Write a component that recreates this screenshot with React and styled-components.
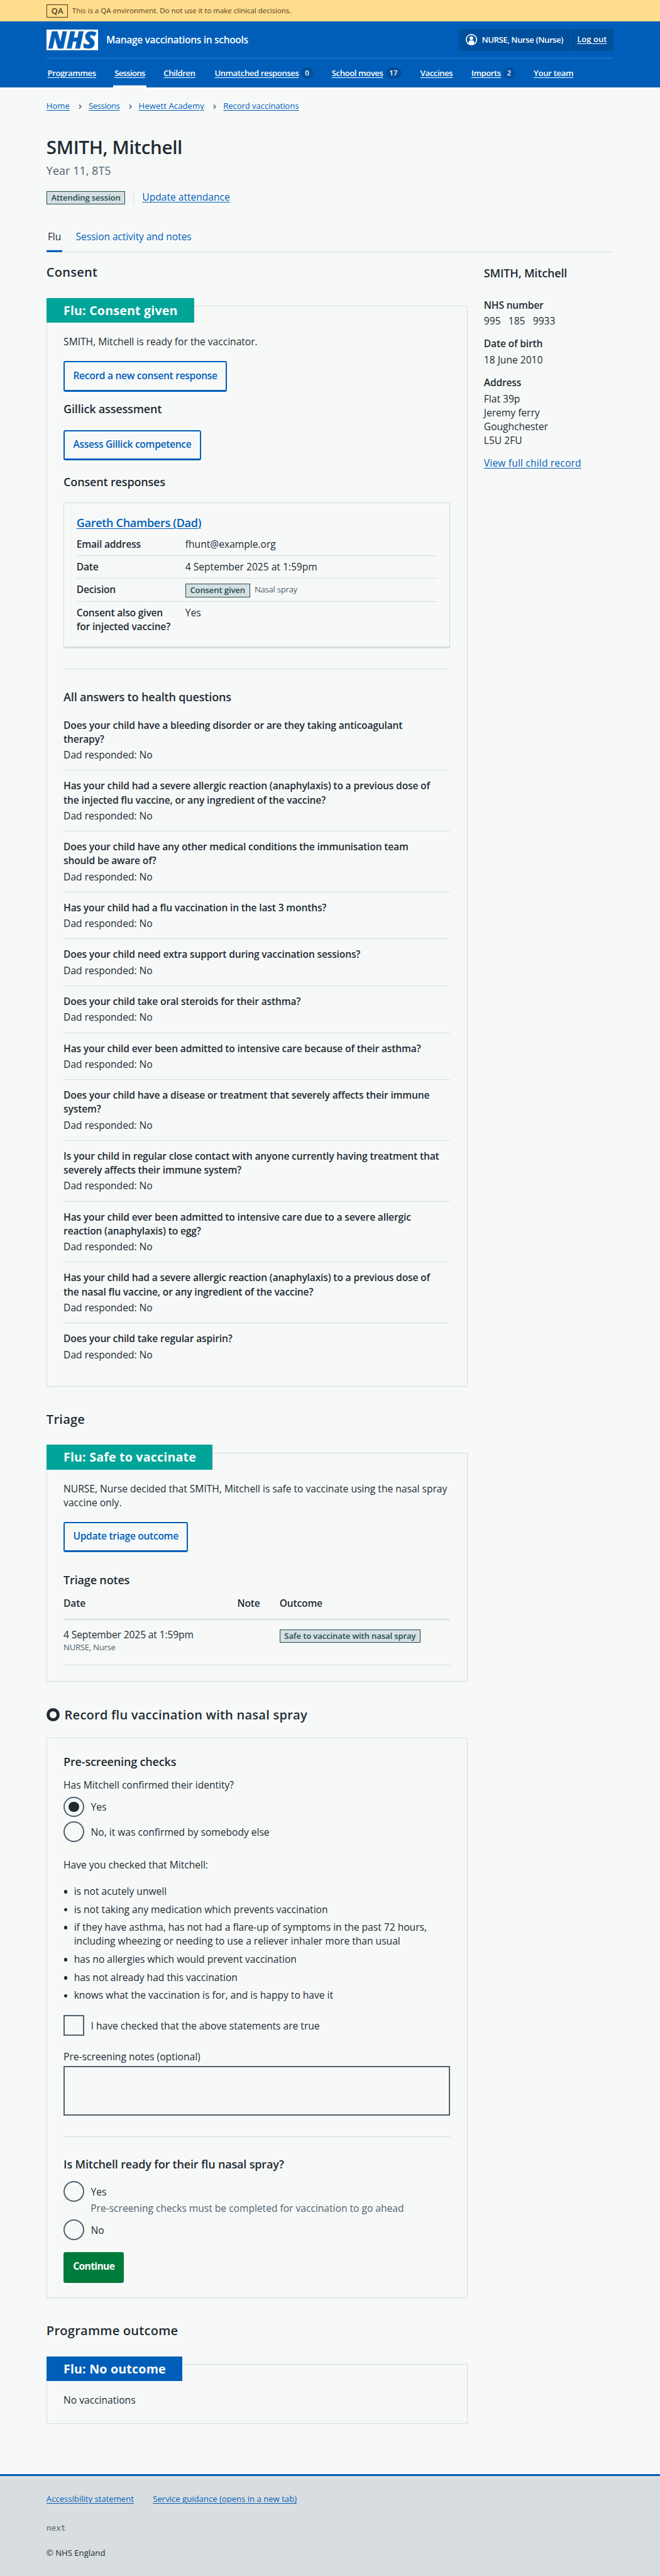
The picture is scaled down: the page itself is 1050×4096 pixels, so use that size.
import React from "react";
import styled, { createGlobalStyle, css } from "styled-components";

const c = {
  text: "#212b32",
  secondary: "#4f616c",
  blue: "#005eb8",
  darkBlue: "#004f9c",
  teal: "#00a499",
  green: "#007b3b",
  border: "#d8dde0",
  page: "#f7f9f9",
  white: "#ffffff",
};

const Global = createGlobalStyle`
  *, *::before, *::after { box-sizing: border-box; }
  html { font-size: 8.2025px; background: ${c.border}; }
  body {
    margin: 0;
    background: ${c.page};
    color: ${c.text};
    font-family: "Open Sans", "Noto Sans", sans-serif;
    font-size: 1.9rem;
    line-height: 2.7rem;
  }
  h1, h2, h3, p, ul, dl, dd, dt { margin: 0; padding: 0; }
`;

const Container = styled.div`
  width: 110rem;
  margin: 0 auto;
`;

const Link = styled.a`
  color: ${c.blue};
  letter-spacing: ${(p) => p.$tracking || "inherit"};
  text-decoration: underline;
  text-decoration-thickness: 1px;
  text-underline-offset: 0.2rem;
`;

/* Environment banner */
const Banner = styled.div`
  height: 4.2rem;
  background: #ffdc8e;
  color: #4d3c11;
`;
const BannerRow = styled(Container)`
  height: 100%;
  display: flex;
  align-items: center;
  gap: 0.8rem;
`;
const BannerTag = styled.strong`
  width: 4.2rem;
  height: 2.6rem;
  border: 1px solid #4d3c11;
  font-size: 1.6rem;
  font-weight: 600;
  line-height: 2.2rem;
  text-align: center;
`;
const BannerText = styled.span`
  font-size: 1.4rem;
  line-height: 2.4rem;
`;

/* Header */
const Header = styled.header`
  height: 12.8rem;
  background: ${c.blue};
  color: ${c.white};
`;
const HeaderTop = styled.div`
  height: 7.2rem;
  display: flex;
  align-items: center;
  justify-content: space-between;
  border-bottom: 1px solid rgba(255, 255, 255, 0.2);
`;
const Brand = styled.div`
  display: flex;
  align-items: center;
  gap: 1.6rem;
`;
const Logo = styled.svg`
  width: 10rem;
  height: 4rem;
  display: block;
  overflow: visible;
`;
const ServiceName = styled.span`
  font-weight: 600;
  letter-spacing: -0.022em;
`;
const Account = styled.div`
  height: 4.2rem;
  display: flex;
  background: ${c.darkBlue};
  border-radius: 0.4rem;
  font-size: 1.6rem;
  font-weight: 600;
  line-height: 4.1rem;
`;
const AccountUser = styled.div`
  width: 21.7rem;
  padding-left: 1.4rem;
  display: flex;
  align-items: center;
  gap: 0.9rem;
  border-right: 1px solid ${c.blue};
  letter-spacing: -0.032em;
  white-space: nowrap;
`;
const UserIcon = styled.svg`
  width: 2.2rem;
  height: 2.2rem;
  flex: none;
`;
const LogOut = styled(Link)`
  padding: 0 1.3rem;
  color: inherit;
`;
const Nav = styled.nav`
  height: 5.6rem;
  margin-left: -0.1rem;
  display: flex;
  gap: 3rem;
`;
const NavItem = styled.a`
  flex: 0 0 ${(p) => p.$width}rem;
  height: 5.6rem;
  padding: 0 0.3rem;
  display: flex;
  align-items: center;
  gap: 0.4rem;
  font-size: 1.6rem;
  font-weight: 600;
  letter-spacing: ${(p) => p.$tracking || "-0.031em"};
  white-space: nowrap;
  ${(p) =>
    p.$current &&
    css`
      box-shadow: inset 0 -0.4rem ${c.white};
    `}
`;
const NavText = styled.span`
  line-height: 2.4rem;
  text-decoration: underline;
  text-decoration-thickness: 1px;
  text-underline-offset: 0.2rem;
`;
const Count = styled.span`
  height: 2.2rem;
  padding: 0 0.79rem;
  border-radius: 1.1rem;
  background: ${c.darkBlue};
  font-size: 1.4rem;
  line-height: 2.2rem;
  letter-spacing: 0;
`;

/* Page top */
const Breadcrumbs = styled.nav`
  padding-top: 2.38rem;
  display: flex;
  align-items: center;
  font-size: 1.6rem;
  line-height: 2.4rem;
`;
const Chevron = styled.svg`
  width: 0.6rem;
  height: 0.9rem;
  margin: 0.1rem 1.35rem 0 1.75rem;
`;
const Title = styled.h1`
  margin-top: 4.52rem;
  font-size: 3.6rem;
  font-weight: 600;
  line-height: 4.4rem;
  letter-spacing: -0.011em;
`;
const Caption = styled.p`
  margin-top: 0.85rem;
  color: ${c.secondary};
  font-size: 2.2rem;
  line-height: 3rem;
`;
const StatusRow = styled.div`
  height: 2.7rem;
  margin-top: 2.45rem;
  display: flex;
  align-items: center;
`;
const StatusAction = styled.div`
  margin-left: 1.6rem;
  padding-left: 1.6rem;
  height: 2.7rem;
  line-height: 2.65rem;
  border-left: 1px solid ${c.border};
`;
const Tag = styled.strong`
  display: inline-block;
  height: 2.6rem;
  padding: 0 0.8rem;
  border: 1px solid #1f4b4d;
  background: #d5dfe1;
  color: #1f4b4d;
  font-size: 1.6rem;
  font-weight: 600;
  line-height: 2.25rem;
  letter-spacing: -0.01em;
  white-space: nowrap;
`;
const Tabs = styled.div`
  height: 4.4rem;
  margin-top: 4.75rem;
  display: flex;
  gap: 2.35rem;
  border-bottom: 1px solid ${c.border};
`;
const Tab = styled.a`
  height: 4.4rem;
  padding: 0 0.25rem;
  color: ${(p) => (p.$current ? c.text : c.blue)};
  letter-spacing: -0.006em;
  ${(p) =>
    p.$current &&
    css`
      width: 3.1rem;
      box-shadow: inset 0 -0.4rem ${c.blue};
    `}
`;
const Columns = styled.div`
  display: grid;
  grid-template-columns: 81.65rem 1fr;
  column-gap: 3.2rem;
`;

/* Sections and cards */
const H2 = styled.h2`
  margin-top: ${(p) => p.$top || 4.73}rem;
  display: flex;
  align-items: center;
  gap: 0.9rem;
  font-size: 2.45rem;
  font-weight: 600;
  line-height: 3.2rem;
  letter-spacing: 0.011em;
`;
const Ring = styled.span`
  width: 2.6rem;
  height: 2.6rem;
  border: 0.72rem solid ${c.text};
  border-radius: 50%;
`;
const H3 = styled.h3`
  margin-top: ${(p) => p.$top}rem;
  font-size: 2.2rem;
  font-weight: 600;
  line-height: 3rem;
  letter-spacing: ${(p) => p.$tracking || "-0.01em"};
`;
const Card = styled.section`
  margin-top: ${(p) => p.$top || 4.83}rem;
  padding: 0 3.2rem ${(p) => p.$bottom}rem;
  border: 1px solid ${c.border};
`;
const CardLabel = styled.h3`
  width: fit-content;
  height: 4.8rem;
  margin: calc(-1.5rem - 1px) 0 0 calc(-3.2rem - 1px);
  padding: 0 3.22rem 0 3.3rem;
  background: ${(p) => p.$color};
  color: ${c.white};
  font-size: 2.4rem;
  font-weight: 700;
  line-height: 4.8rem;
  letter-spacing: 0.008em;
`;
const Text = styled.p`
  margin-top: ${(p) => p.$top}rem;
`;
const Rule = styled.div`
  height: 1px;
  margin-top: 4rem;
  background: ${c.border};
`;
const Button = styled.a`
  display: block;
  width: fit-content;
  height: 5.9rem;
  margin-top: ${(p) => p.$top}rem;
  padding: 1.1rem 1.63rem 0;
  border: 2px solid ${c.blue};
  border-bottom-width: 3px;
  border-radius: 0.4rem;
  color: ${c.blue};
  font-weight: 600;
  letter-spacing: -0.0195em;
`;
const PrimaryButton = styled(Button)`
  padding: 1.1rem 1.6rem 0;
  border-color: ${c.green};
  background: ${c.green};
  color: ${c.white};
  font-weight: 700;
  letter-spacing: -0.039em;
`;

/* Consent response */
const Response = styled.div`
  height: 28.2rem;
  margin-top: 2.55rem;
  padding: 2.25rem 2.4rem 0;
  border: 1px solid ${c.border};
  border-bottom: 3px solid ${c.border};
`;
const Summary = styled.dl`
  margin-top: 0.56rem;
`;
const SummaryRow = styled.div`
  display: grid;
  grid-template-columns: 21.1rem 1fr;
  height: ${(p) => p.$height || 4.4}rem;
  padding-top: 0.7rem;
  border-bottom: ${(p) => (p.$last ? "0" : `1px solid ${c.border}`)};
`;
const Key = styled.dt`
  font-weight: 600;
  letter-spacing: -0.012em;
  white-space: pre-line;
`;
const Decision = styled.dd`
  display: flex;
  align-items: flex-start;
  gap: 0.9rem;
  padding-top: 0.3rem;
`;
const Small = styled.span`
  display: block;
  color: ${c.secondary};
  font-size: 1.6rem;
  line-height: 2.4rem;
  letter-spacing: -0.02em;
`;

/* Health answers */
const Answers = styled.dl`
  margin-top: 0.98rem;
`;
const AnswerItem = styled.div`
  padding: 1.6rem 0 calc(1.7rem - 1px);
  border-bottom: 1px solid ${c.border};
  &:last-child {
    border-bottom: 0;
  }
`;
const Question = styled.dt`
  font-weight: 600;
  letter-spacing: -0.01em;
  white-space: pre-line;
`;
const Answer = styled.dd`
  margin-top: 0.4rem;
`;

/* Triage table */
const TableRow = styled.div`
  display: grid;
  grid-template-columns: 33.7rem 8.2rem 1fr;
`;
const TableHead = styled(TableRow)`
  height: 4.6rem;
  margin-top: 1.66rem;
  border-bottom: 2px solid ${c.border};
  font-weight: 600;
  letter-spacing: -0.012em;
`;
const TableBody = styled(TableRow)`
  height: 8.75rem;
  padding-top: 1.5rem;
  border-bottom: 1px solid ${c.border};
  letter-spacing: -0.008em;
`;
const OutcomeCell = styled.div`
  display: flex;
  padding-top: 0.3rem;
`;

/* Form controls */
const Choice = styled.div`
  margin-top: ${(p) => p.$top}rem;
  display: flex;
  gap: 1.3rem;
`;
const Control = styled.span`
  width: 4rem;
  height: 4rem;
  flex: none;
  display: grid;
  place-items: center;
  border: 2px solid ${c.secondary};
  border-radius: ${(p) => (p.$square ? "0" : "50%")};
`;
const Dot = styled.span`
  width: 2rem;
  height: 2rem;
  border-radius: 50%;
  background: ${c.text};
`;
const ChoiceLabel = styled.span`
  padding-top: 0.7rem;
`;
const Hint = styled.p`
  margin: -0.16rem 0 0 5.25rem;
  color: ${c.secondary};
`;
const Bullets = styled.ul`
  margin-top: 2.4rem;
  padding-left: 2.02rem;
  display: grid;
  gap: 0.8rem;
  list-style: none;
`;
const Bullet = styled.li`
  display: grid;
  white-space: pre-line;
  &::before {
    content: "";
    grid-area: 1 / 1;
    width: 0.7rem;
    height: 0.7rem;
    margin: 1.1rem 0 0 -1.96rem;
    border-radius: 50%;
    background: ${c.text};
  }
`;
const BulletText = styled.span`
  grid-area: 1 / 1;
`;
const TextArea = styled.div`
  height: 9.6rem;
  margin-top: 0.5rem;
  border: 2px solid ${c.secondary};
`;

/* Aside */
const Aside = styled.aside`
  padding-top: 2.65rem;
`;
const Details = styled.dl`
  margin-top: 3.26rem;
`;
const DetailTerm = styled.dt`
  font-weight: 600;
  letter-spacing: -0.011em;
`;
const DetailValue = styled.dd`
  margin: 0.43rem 0 1.7rem;
  white-space: pre-line;
  word-spacing: ${(p) => (p.$spaced ? "1rem" : "normal")};
`;

/* Footer */
const Footer = styled.footer`
  margin-top: 9.65rem;
  height: 19.7rem;
  padding-top: 3.38rem;
  border-top: 3px solid ${c.blue};
  background: ${c.border};
  font-size: 1.6rem;
  line-height: 2.4rem;
`;
const FooterLinks = styled.div`
  display: flex;
  gap: 3.7rem;
`;
const Version = styled.p`
  margin-top: 3.2rem;
  color: ${c.secondary};
  font-family: "DejaVu Sans Mono", monospace;
  font-size: 1.55rem;
`;
const Copyright = styled.p`
  margin-top: 2.45rem;
`;

const navItems = [
  { label: "Programmes", width: 10 },
  { label: "Sessions", width: 6.4, current: true, tracking: "-0.05em" },
  { label: "Children", width: 6.9 },
  { label: "Unmatched responses", width: 19.7, count: 0 },
  { label: "School moves", width: 14.2, count: 17 },
  { label: "Vaccines", width: 6.8 },
  { label: "Imports", width: 9.1, count: 2 },
  { label: "Your team", width: 8.3, tracking: "-0.024em" },
];

const crumbs = [
  ["Home", "-0.003em"],
  ["Sessions", "-0.032em"],
  ["Hewett Academy", "0.006em"],
  ["Record vaccinations", "-0.006em"],
];

const questions = [
  "Does your child have a bleeding disorder or are they taking anticoagulant\ntherapy?",
  "Has your child had a severe allergic reaction (anaphylaxis) to a previous dose of\nthe injected flu vaccine, or any ingredient of the vaccine?",
  "Does your child have any other medical conditions the immunisation team\nshould be aware of?",
  "Has your child had a flu vaccination in the last 3 months?",
  "Does your child need extra support during vaccination sessions?",
  "Does your child take oral steroids for their asthma?",
  "Has your child ever been admitted to intensive care because of their asthma?",
  "Does your child have a disease or treatment that severely affects their immune\nsystem?",
  "Is your child in regular close contact with anyone currently having treatment that\nseverely affects their immune system?",
  "Has your child ever been admitted to intensive care due to a severe allergic\nreaction (anaphylaxis) to egg?",
  "Has your child had a severe allergic reaction (anaphylaxis) to a previous dose of\nthe nasal flu vaccine, or any ingredient of the vaccine?",
  "Does your child take regular aspirin?",
];

const checks = [
  "is not acutely unwell",
  "is not taking any medication which prevents vaccination",
  "if they have asthma, has not had a flare-up of symptoms in the past 72 hours,\nincluding wheezing or needing to use a reliever inhaler more than usual",
  "has no allergies which would prevent vaccination",
  "has not already had this vaccination",
  "knows what the vaccination is for, and is happy to have it",
];

function Radio({ label, top, checked }) {
  return (
    <Choice $top={top}>
      <Control>{checked && <Dot />}</Control>
      <ChoiceLabel>{label}</ChoiceLabel>
    </Choice>
  );
}

export default function App() {
  return (
    <>
      <Global />
      <Banner>
        <BannerRow>
          <BannerTag>QA</BannerTag>
          <BannerText>
            This is a QA environment. Do not use it to make clinical decisions.
          </BannerText>
        </BannerRow>
      </Banner>

      <Header>
        <Container>
          <HeaderTop>
            <Brand>
              <Logo viewBox="0 0 100 40" role="img" aria-label="NHS">
                <rect width="100" height="40" fill="#fff" />
                <text
                  x="3"
                  y="36.3"
                  textLength="93"
                  lengthAdjust="spacingAndGlyphs"
                  fill={c.blue}
                  stroke={c.blue}
                  strokeWidth="0.8"
                  fontFamily="Open Sans, sans-serif"
                  fontSize="45.5"
                  fontWeight="800"
                  fontStyle="italic"
                >
                  NHS
                </text>
              </Logo>
              <ServiceName>Manage vaccinations in schools</ServiceName>
            </Brand>
            <Account>
              <AccountUser>
                <UserIcon viewBox="0 0 22 22" fill="#fff">
                  <circle cx="11" cy="11" r="10" fill="none" stroke="#fff" strokeWidth="2" />
                  <circle cx="11" cy="8.3" r="3.6" />
                  <path d="M5.6 18.4V16a3.4 3.4 0 0 1 3.4-3.4h4a3.4 3.4 0 0 1 3.4 3.4v2.4Q11 22.5 5.6 18.4z" />
                </UserIcon>
                NURSE, Nurse (Nurse)
              </AccountUser>
              <LogOut>Log out</LogOut>
            </Account>
          </HeaderTop>
          <Nav>
            {navItems.map((n) => (
              <NavItem key={n.label} $width={n.width} $current={n.current} $tracking={n.tracking}>
                <NavText>{n.label}</NavText>
                {n.count !== undefined && <Count>{n.count}</Count>}
              </NavItem>
            ))}
          </Nav>
        </Container>
      </Header>

      <Container>
        <Breadcrumbs>
          {crumbs.map(([label, tracking], i) => (
            <React.Fragment key={label}>
              {i > 0 && (
                <Chevron viewBox="0 0 6 9" fill="none" stroke={c.secondary} strokeWidth="1.8">
                  <path d="M1 .6 4.8 4.5 1 8.4" />
                </Chevron>
              )}
              <Link $tracking={tracking}>{label}</Link>
            </React.Fragment>
          ))}
        </Breadcrumbs>
        <Title>SMITH, Mitchell</Title>
        <Caption>Year 11, 8T5</Caption>
        <StatusRow>
          <Tag>Attending session</Tag>
          <StatusAction>
            <Link>Update attendance</Link>
          </StatusAction>
        </StatusRow>
        <Tabs>
          <Tab $current>Flu</Tab>
          <Tab>Session activity and notes</Tab>
        </Tabs>

        <Columns>
          <main>
            <H2 $top={2.37}>Consent</H2>
            <Card $bottom={3.2}>
              <CardLabel $color={c.teal}>Flu: Consent given</CardLabel>
              <Text $top={2.31}>SMITH, Mitchell is ready for the vaccinator.</Text>
              <Button $top={2.49}>Record a new consent response</Button>
              <H3 $top={1.85}>Gillick assessment</H3>
              <Button $top={2.55}>Assess Gillick competence</Button>
              <H3 $top={2.65}>Consent responses</H3>
              <Response>
                <H3 $top={0} $tracking="-0.017em">
                  <Link>Gareth Chambers (Dad)</Link>
                </H3>
                <Summary>
                  <SummaryRow>
                    <Key>Email address</Key>
                    <dd>fhunt@example.org</dd>
                  </SummaryRow>
                  <SummaryRow>
                    <Key>Date</Key>
                    <dd>4 September 2025 at 1:59pm</dd>
                  </SummaryRow>
                  <SummaryRow $height={4.5}>
                    <Key>Decision</Key>
                    <Decision>
                      <Tag>Consent given</Tag>
                      <Small>Nasal spray</Small>
                    </Decision>
                  </SummaryRow>
                  <SummaryRow $last $height={6.1}>
                    <Key>{"Consent also given\nfor injected vaccine?"}</Key>
                    <dd>Yes</dd>
                  </SummaryRow>
                </Summary>
              </Response>
              <Rule />
              <H3 $top={3.85}>All answers to health questions</H3>
              <Answers>
                {questions.map((q) => (
                  <AnswerItem key={q}>
                    <Question>{q}</Question>
                    <Answer>Dad responded: No</Answer>
                  </AnswerItem>
                ))}
              </Answers>
            </Card>

            <H2>Triage</H2>
            <Card $bottom={3.1}>
              <CardLabel $color={c.teal}>Flu: Safe to vaccinate</CardLabel>
              <Text $top={2.33}>
                NURSE, Nurse decided that SMITH, Mitchell is safe to vaccinate using the nasal spray
                <br />
                vaccine only.
              </Text>
              <Button $top={2.45}>Update triage outcome</Button>
              <H3 $top={3.85}>Triage notes</H3>
              <TableHead>
                <span>Date</span>
                <span>Note</span>
                <span>Outcome</span>
              </TableHead>
              <TableBody>
                <div>
                  4 September 2025 at 1:59pm
                  <Small>NURSE, Nurse</Small>
                </div>
                <span />
                <OutcomeCell>
                  <Tag>Safe to vaccinate with nasal spray</Tag>
                </OutcomeCell>
              </TableBody>
            </Card>

            <H2 $top={4.8}>
              <Ring />
              Record flu vaccination with nasal spray
            </H2>
            <Card $top={2.87} $bottom={2.8}>
              <H3 $top={3}>Pre-screening checks</H3>
              <Text $top={1.68}>Has Mitchell confirmed their identity?</Text>
              <Radio top={0.87} label="Yes" checked />
              <Radio top={0.8} label="No, it was confirmed by somebody else" />
              <Text $top={3.1}>Have you checked that Mitchell:</Text>
              <Bullets>
                {checks.map((t) => (
                  <Bullet key={t}>
                    <BulletText>{t}</BulletText>
                  </Bullet>
                ))}
              </Bullets>
              <Choice $top={2.5}>
                <Control $square />
                <ChoiceLabel>I have checked that the above statements are true</ChoiceLabel>
              </Choice>
              <Text $top={2.7}>Pre-screening notes (optional)</Text>
              <TextArea />
              <Rule />
              <H3 $top={3.83}>Is Mitchell ready for their flu nasal spray?</H3>
              <Radio top={1.75} label="Yes" />
              <Hint>Pre-screening checks must be completed for vaccination to go ahead</Hint>
              <Radio top={0.86} label="No" />
              <PrimaryButton $top={2.4}>Continue</PrimaryButton>
            </Card>

            <H2 $top={4.8}>Programme outcome</H2>
            <Card $bottom={3.23}>
              <CardLabel $color={c.blue}>Flu: No outcome</CardLabel>
              <Text $top={2.3}>No vaccinations</Text>
            </Card>
          </main>

          <Aside>
            <H3 $top={0}>SMITH, Mitchell</H3>
            <Details>
              <DetailTerm>NHS number</DetailTerm>
              <DetailValue $spaced>995 185 9933</DetailValue>
              <DetailTerm>Date of birth</DetailTerm>
              <DetailValue>18 June 2010</DetailValue>
              <DetailTerm>Address</DetailTerm>
              <DetailValue>{"Flat 39p\nJeremy ferry\nGoughchester\nL5U 2FU"}</DetailValue>
            </Details>
            <Link $tracking="0.011em">View full child record</Link>
          </Aside>
        </Columns>
      </Container>

      <Footer>
        <Container>
          <FooterLinks>
            <Link>Accessibility statement</Link>
            <Link>Service guidance (opens in a new tab)</Link>
          </FooterLinks>
          <Version>next</Version>
          <Copyright>© NHS England</Copyright>
        </Container>
      </Footer>
    </>
  );
}
